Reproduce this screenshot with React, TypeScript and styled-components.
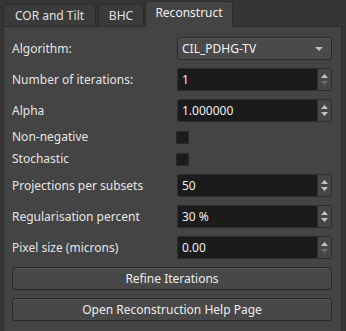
import React from "react";
import styled, { createGlobalStyle } from "styled-components";

const Global = createGlobalStyle`
  html, body {
    margin: 0;
    padding: 0;
    overflow: hidden;
    background: #353535;
  }
  body {
    font-family: "Noto Sans", "Open Sans", sans-serif;
    font-size: 12px;
    color: #e4e4e4;
  }
`;

const Window = styled.div`
  width: 346px;
  height: 331px;
  padding: 2px 4px 0 3px;
  box-sizing: border-box;
  display: flex;
  flex-direction: column;
`;

const TabBar = styled.div`
  display: flex;
  align-items: flex-end;
  height: 25px;
  margin-bottom: -1px;
  position: relative;
  z-index: 1;
`;

const Tab = styled.div<{ $active?: boolean; $w: number }>`
  width: ${(p) => p.$w}px;
  height: ${(p) => (p.$active ? "26px" : "23px")};
  box-sizing: border-box;
  margin-right: ${(p) => (p.$active ? "0" : "2px")};
  margin-left: ${(p) => (p.$active ? "-1px" : "0")};
  display: flex;
  align-items: center;
  justify-content: center;
  background: ${(p) => (p.$active ? "#444444" : "#3b3b3b")};
  border: 1px solid #2c2c2c;
  border-bottom: ${(p) => (p.$active ? "1px solid #444444" : "1px solid #2c2c2c")};
  border-radius: 3px 3px 0 0;
  color: ${(p) => (p.$active ? "#f0f0f0" : "#e0e0e0")};
  padding-bottom: ${(p) => (p.$active ? "3px" : "0")};
`;

const Panel = styled.div`
  flex: 1;
  background: #444444;
  border: 1px solid #2c2c2c;
  border-bottom: none;
  padding: 10px 9px 0 8px;
`;

const Form = styled.div`
  display: grid;
  grid-template-columns: 165px 155px;
  row-gap: 8px;
  align-items: center;
`;

const Label = styled.div`
  line-height: 14px;
  white-space: nowrap;
`;

const Combo = styled.div`
  height: 23px;
  box-sizing: border-box;
  border: 1px solid #2a2a2a;
  border-radius: 3px;
  background: #4a4a4a;
  box-shadow: inset 0 1px 0 #555555;
  display: flex;
  align-items: center;
  justify-content: space-between;
  padding: 0 8px 0 4px;
  color: #f2f2f2;
`;

const Spin = styled.div`
  height: 23px;
  box-sizing: border-box;
  border: 1px solid #2e2e2e;
  border-radius: 2px;
  background: #1b1b1b;
  display: flex;
  align-items: stretch;
`;

const SpinText = styled.div`
  flex: 1;
  display: flex;
  align-items: center;
  padding-left: 4px;
  color: #f0f0f0;
`;

const SpinButtons = styled.div`
  width: 13px;
  background: #464646;
  border-left: 1px solid #2e2e2e;
  display: flex;
  flex-direction: column;
  align-items: center;
  justify-content: center;
  gap: 3px;
`;

const Check = styled.div`
  width: 13px;
  height: 13px;
  box-sizing: border-box;
  background: #1c1c1c;
  border: 1px solid #2a2a2a;
  margin-left: -1px;
`;

const CheckCell = styled.div`
  height: 14px;
  display: flex;
  align-items: center;
`;

const Button = styled.div`
  grid-column: 1 / span 2;
  height: 23px;
  box-sizing: border-box;
  border: 1px solid #282828;
  border-radius: 3px;
  background: #484848;
  box-shadow: inset 0 1px 0 #525252;
  display: flex;
  align-items: center;
  justify-content: center;
  color: #ececec;
`;

const Arrow = ({ up, dim }: { up?: boolean; dim?: boolean }) => (
  <svg width="7" height="4" viewBox="0 0 7 4">
    <path
      d={up ? "M0 4 L3.5 0 L7 4 Z" : "M0 0 L7 0 L3.5 4 Z"}
      fill={dim ? "#6c6c6c" : "#c4c4c4"}
    />
  </svg>
);

const SpinBox = ({ value, minDim }: { value: string; minDim?: boolean }) => (
  <Spin>
    <SpinText>{value}</SpinText>
    <SpinButtons>
      <Arrow up />
      <Arrow dim={minDim} />
    </SpinButtons>
  </Spin>
);

const rows: { label: string; value: string; minDim?: boolean }[] = [
  { label: "Projections per subsets", value: "50" },
  { label: "Regularisation percent", value: "30 %" },
  { label: "Pixel size (microns)", value: "0.00", minDim: true },
];

export default function App() {
  return (
    <>
      <Global />
      <Window>
        <TabBar>
          <Tab $w={93}>COR and Tilt</Tab>
          <Tab $w={46}>BHC</Tab>
          <Tab $active $w={88}>Reconstruct</Tab>
        </TabBar>
        <Panel>
          <Form>
            <Label>Algorithm:</Label>
            <Combo>
              <span>CIL_PDHG-TV</span>
              <svg width="8" height="4" viewBox="0 0 8 4">
                <path d="M0 0 L8 0 L4 4 Z" fill="#bdbdbd" />
              </svg>
            </Combo>
            <Label>Number of iterations:</Label>
            <SpinBox value="1" minDim />
            <Label>Alpha</Label>
            <SpinBox value="1.000000" />
            <Label>Non-negative</Label>
            <CheckCell>
              <Check />
            </CheckCell>
            <Label>Stochastic</Label>
            <CheckCell>
              <Check />
            </CheckCell>
            {rows.map((r) => (
              <React.Fragment key={r.label}>
                <Label>{r.label}</Label>
                <SpinBox value={r.value} minDim={r.minDim} />
              </React.Fragment>
            ))}
            <Button>Refine Iterations</Button>
            <Button>Open Reconstruction Help Page</Button>
          </Form>
        </Panel>
      </Window>
    </>
  );
}
